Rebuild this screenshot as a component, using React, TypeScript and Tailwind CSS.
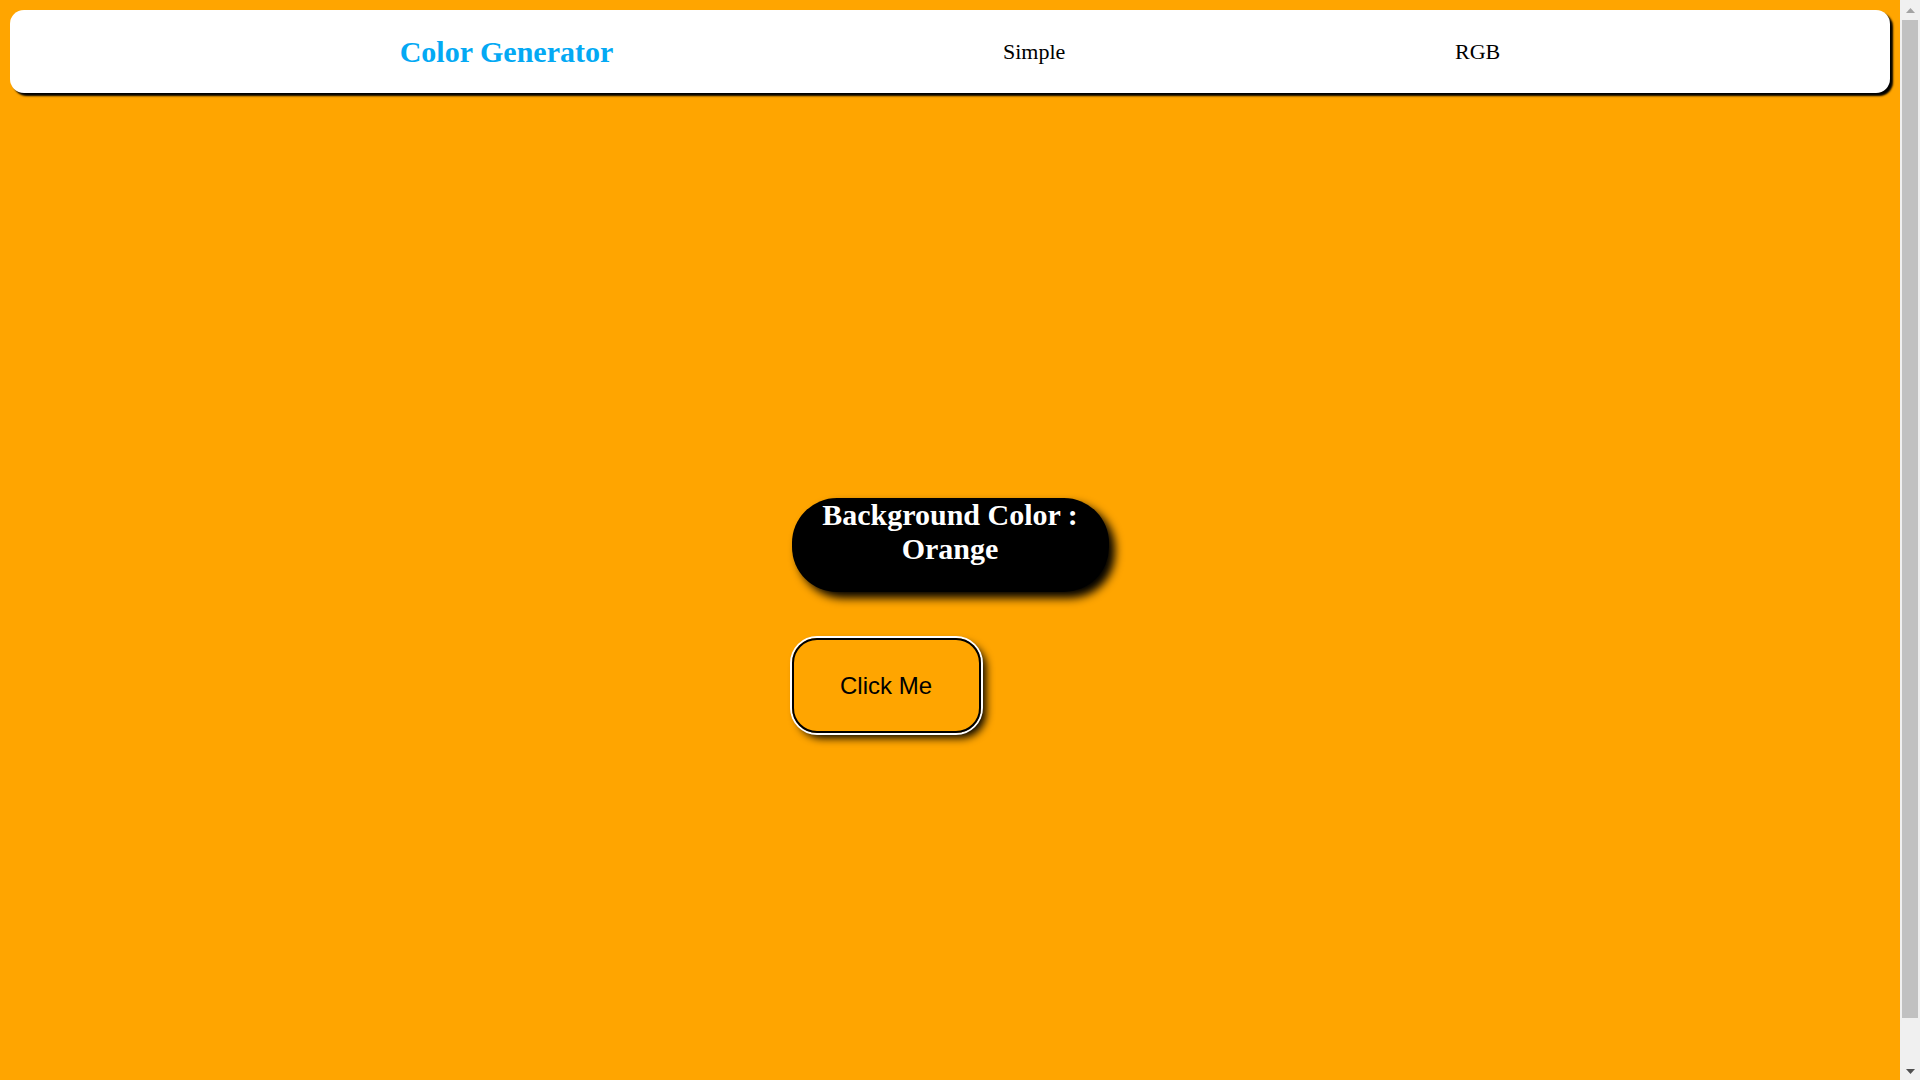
function ScrollStrip() {
    return (
        <div className="w-[20px] h-screen bg-[#f0f0f0] flex flex-col items-center shrink-0">
            <div className="h-[20px] flex items-center justify-center">
                <svg width="9" height="5" viewBox="0 0 9 5">
                    <path d="M0 5 L4.5 0 L9 5 Z" fill="#a3a3a3" />
                </svg>
            </div>
            <div className="w-[16px] flex-1 bg-[#c1c1c1]" />
            <div className="h-[62px] flex items-end justify-center pb-[6px]">
                <svg width="9" height="5" viewBox="0 0 9 5">
                    <path d="M0 0 L4.5 5 L9 0 Z" fill="#505050" />
                </svg>
            </div>
        </div>
    )
}

export default function App() {
    const links = ["Simple", "RGB"]
    return (
        <div className="w-full h-screen flex bg-[#ffa500] overflow-hidden" style={{ fontFamily: '"Liberation Serif", "Times New Roman", serif' }}>
            <div className="flex-1 h-screen overflow-hidden">
                <div className="p-[10px]">
                    <nav className="h-[83px] bg-white rounded-[14px] shadow-[3px_3px_2px_#000] flex justify-evenly items-center">
                        <span className="text-[30px] font-bold text-[#03a9f4] leading-none">Color Generator</span>
                        {links.map((link) => (
                            <a key={link} className="text-[22px] text-black leading-none cursor-pointer">
                                {link}
                            </a>
                        ))}
                    </nav>
                </div>
                <main className="h-[1025px] flex justify-center items-center">
                    <div className="flex flex-col items-start gap-[46px]">
                        <h1 className="w-[317px] h-[94px] bg-black text-white text-[30px] font-bold text-center leading-[1.13] rounded-[45px] shadow-[6px_6px_10px_#000]">
                            Background Color : Orange
                        </h1>
                        <button className="w-[189px] h-[95px] rounded-[25px] border-2 border-black bg-transparent text-[24px] text-black shadow-[0_0_0_2px_#fff,5px_5px_8px_#000] font-['Liberation_Sans',Arial,sans-serif]">
                            Click Me
                        </button>
                    </div>
                </main>
            </div>
            <ScrollStrip />
        </div>
    )
}
